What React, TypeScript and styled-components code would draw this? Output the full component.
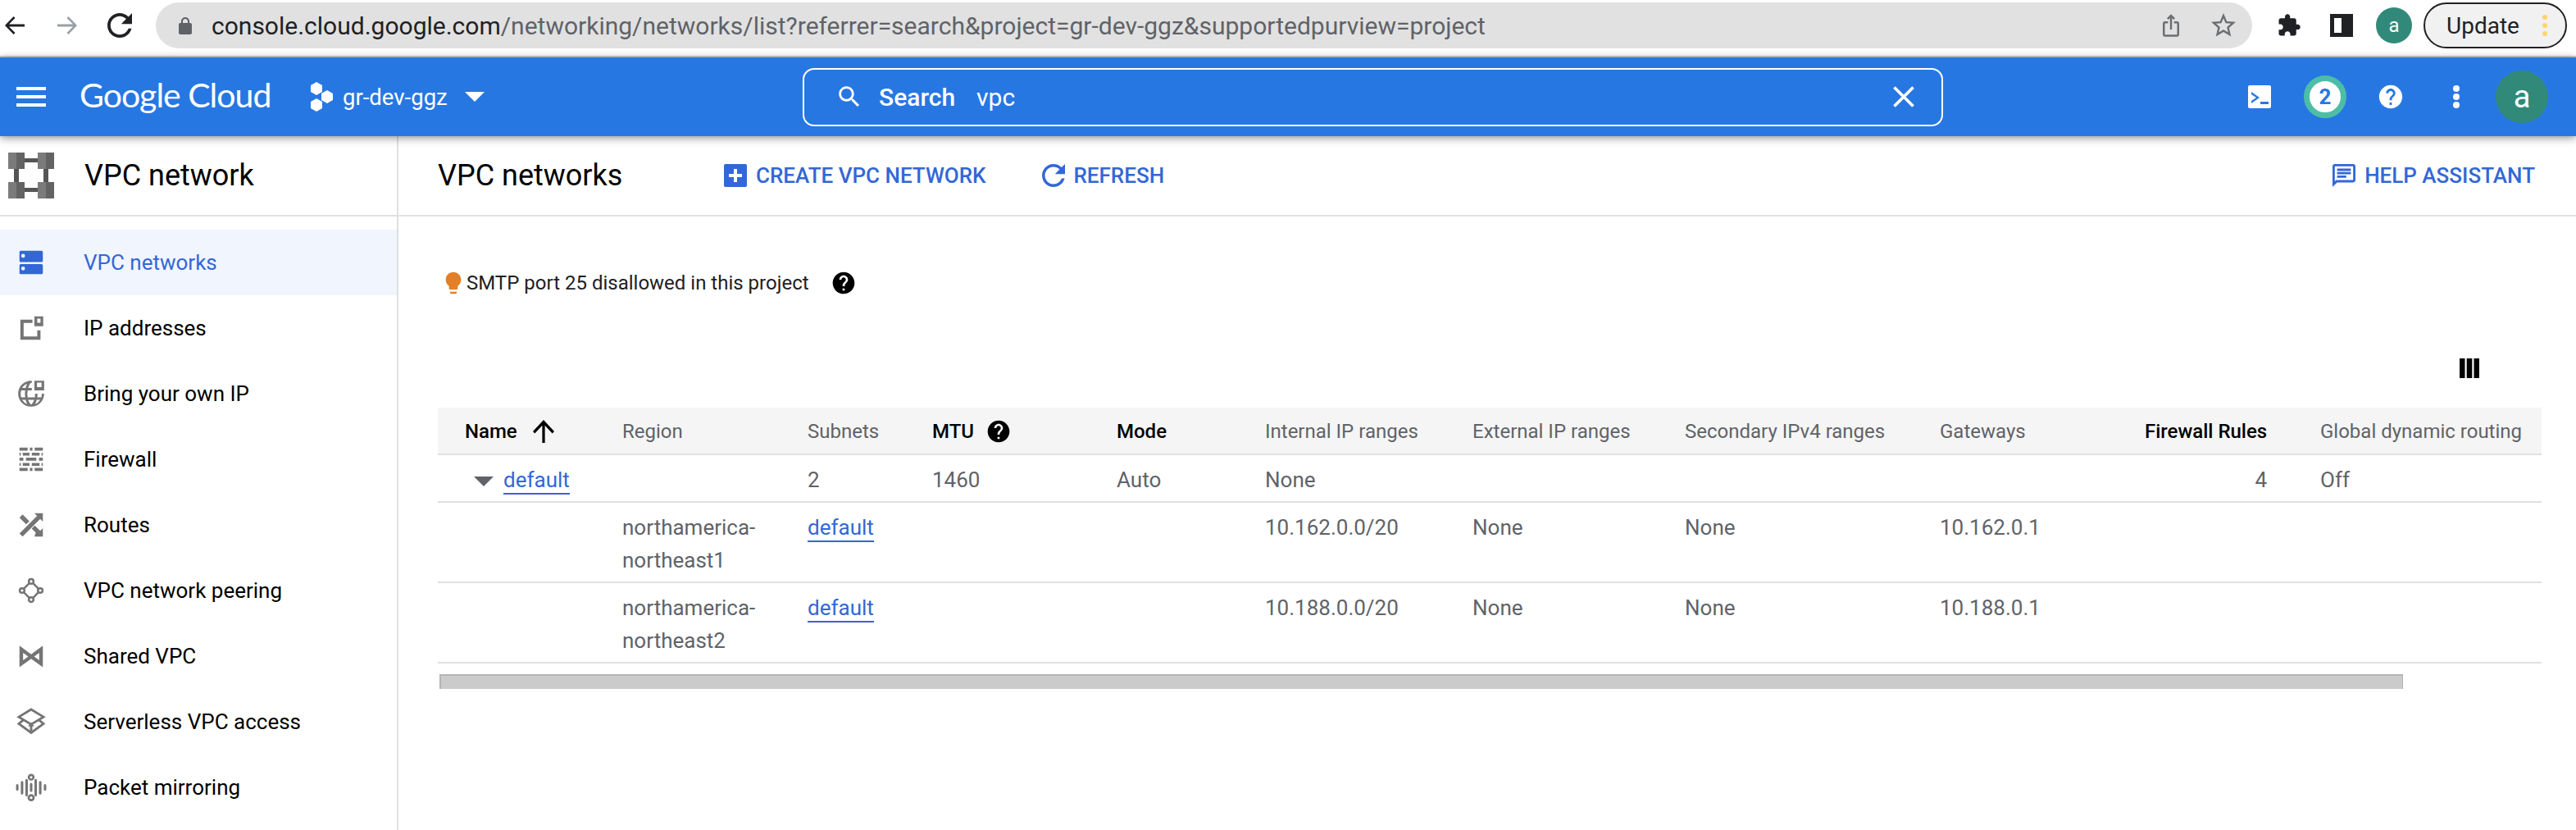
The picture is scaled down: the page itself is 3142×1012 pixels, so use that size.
import React from 'react';
import styled, { createGlobalStyle } from 'styled-components';

const GlobalStyle = createGlobalStyle`
    html, body {
        margin: 0;
        width: 3142px;
        height: 1012px;
        overflow: hidden;
        background: #fff;
        font-family: Roboto, "Liberation Sans", sans-serif;
    }
    * { box-sizing: border-box; }
`;

const Page = styled.div`
    width: 3142px;
    height: 1012px;
    display: flex;
    flex-direction: column;
    overflow: hidden;
`;

/* browser chrome */
const BrowserBar = styled.div`
    height: 70px;
    flex: none;
    display: flex;
    align-items: center;
    padding: 0 0 6px 3px;
    border-bottom: 2px solid #cfcfcf;
    background: #fff;
`;

const ChromeIcon = styled.svg<{ $left?: number; $color?: string }>`
    width: 30px;
    height: 30px;
    flex: none;
    margin-left: ${p => p.$left ?? 0}px;
    fill: ${p => p.$color ?? '#202124'};
`;

const UrlPill = styled.div`
    width: 2557px;
    height: 56px;
    margin-left: 29px;
    flex: none;
    display: flex;
    align-items: center;
    padding-left: 27px;
    border-radius: 28px;
    background: #e1e1e1;
`;

const LockIcon = styled.svg`
    width: 18px;
    height: 21px;
    flex: none;
    fill: #5f6368;
`;

const UrlText = styled.div`
    margin-left: 23px;
    font-size: 30px;
    color: #5f6368;
    white-space: nowrap;
`;

const UrlHost = styled.span`
    color: #202124;
`;

const UrlActions = styled.div`
    margin-left: auto;
    padding-right: 20px;
    display: flex;
    align-items: center;
    gap: 30px;
`;

const SmallAvatar = styled.div`
    width: 44px;
    height: 44px;
    margin-left: 27px;
    flex: none;
    display: flex;
    align-items: center;
    justify-content: center;
    border-radius: 50%;
    background: #318a79;
    color: #fff;
    font-size: 24px;
`;

const UpdateButton = styled.div`
    width: 175px;
    height: 56px;
    margin-left: 14px;
    flex: none;
    display: flex;
    align-items: center;
    padding-left: 26px;
    border: 2px solid #202124;
    border-radius: 28px;
    background: #f1f1f1;
    color: #202124;
    font-size: 28px;
`;

const UpdateDots = styled.div`
    margin-left: auto;
    margin-right: 22px;
    display: flex;
    flex-direction: column;
    gap: 4px;
`;

const UpdateDot = styled.span`
    width: 6px;
    height: 6px;
    border-radius: 50%;
    background: #fdd663;
`;

/* blue console bar */
const TopBar = styled.header`
    height: 96px;
    flex: none;
    position: relative;
    z-index: 2;
    display: flex;
    align-items: center;
    padding: 0 26px 0 20px;
    background: #2777e3;
    color: #fff;
    box-shadow: 0 2px 10px rgba(0, 0, 0, 0.45);
`;

const Hamburger = styled.svg`
    width: 36px;
    height: 24px;
    flex: none;
    fill: #fff;
`;

const Logo = styled.div`
    width: 231px;
    margin-left: 41px;
    flex: none;
    font-family: Lato, Roboto, sans-serif;
    font-size: 41px;
    line-height: 48px;
    letter-spacing: -1px;
    white-space: nowrap;
    transform: translateY(-2px);
`;

const ProjectIcon = styled.svg`
    width: 28px;
    height: 36px;
    margin-left: 50px;
    flex: none;
    fill: #fff;
`;

const ProjectName = styled.div`
    width: 130px;
    margin-left: 12px;
    flex: none;
    font-size: 27.5px;
    white-space: nowrap;
`;

const Caret = styled.div`
    width: 0;
    height: 0;
    margin-left: 19px;
    flex: none;
    border-left: 12px solid transparent;
    border-right: 12px solid transparent;
    border-top: 12px solid #fff;
`;

const SearchBox = styled.div`
    width: 1391px;
    height: 71px;
    margin-left: 388px;
    flex: none;
    display: flex;
    align-items: center;
    padding: 0 24px 0 38px;
    border: 2px solid #fff;
    border-radius: 14px;
    font-size: 30px;
`;

const WhiteIcon = styled.svg<{ $size?: number }>`
    width: ${p => p.$size ?? 36}px;
    height: ${p => p.$size ?? 36}px;
    flex: none;
    fill: #fff;
`;

const SearchLabel = styled.span`
    margin-left: 19px;
    font-weight: 500;
`;

const SearchValue = styled.span`
    margin-left: 26px;
    flex: 1;
`;

const TopActions = styled.div`
    margin-left: auto;
    display: flex;
    align-items: center;
`;

const TopAction = styled.div`
    width: 80px;
    display: flex;
    align-items: center;
    justify-content: center;
`;

const Badge = styled.div`
    width: 52px;
    height: 52px;
    display: flex;
    align-items: center;
    justify-content: center;
    border: 7px solid #4dbda6;
    border-radius: 50%;
    background: #fff;
    color: #2777e3;
    font-size: 26px;
    font-weight: 700;
`;

const Avatar = styled.div`
    width: 64px;
    height: 64px;
    display: flex;
    align-items: center;
    justify-content: center;
    border-radius: 50%;
    background: #318a79;
    color: #fff;
    font-size: 38px;
`;

/* page below the bar */
const Content = styled.div`
    flex: 1;
    display: flex;
    min-height: 0;
`;

const Sidebar = styled.aside`
    width: 486px;
    flex: none;
    border-right: 2px solid #e0e0e0;
`;

const SidebarHeader = styled.div`
    height: 98px;
    display: flex;
    align-items: center;
    padding: 0 0 1px 10px;
    border-bottom: 2px solid #e0e0e0;
    font-size: 36px;
    color: #000;
`;

const HeaderIcon = styled.svg`
    width: 56px;
    height: 56px;
    flex: none;
    margin-right: 37px;
`;

const NavList = styled.nav`
    padding-top: 16px;
`;

const NavRow = styled.div<{ $active?: boolean }>`
    height: 80px;
    display: flex;
    align-items: center;
    background: ${p => (p.$active ? '#f0f5fe' : 'transparent')};
    color: ${p => (p.$active ? '#3367d6' : '#000')};
    font-size: 26px;
`;

const NavIconSlot = styled.svg<{ $active?: boolean }>`
    width: 38px;
    height: 38px;
    margin: 0 45px 0 19px;
    flex: none;
    color: ${p => (p.$active ? '#3367d6' : '#757575')};
    fill: currentColor;
`;

const Main = styled.main`
    flex: 1;
    min-width: 0;
`;

const Toolbar = styled.div`
    height: 98px;
    display: flex;
    align-items: center;
    padding: 0 50px 1px 48px;
    border-bottom: 2px solid #e0e0e0;
`;

const PageTitle = styled.h1`
    width: 349px;
    margin: 0;
    flex: none;
    font-size: 36px;
    font-weight: 400;
    color: #000;
`;

const ToolButton = styled.div<{ $left?: number; $push?: boolean }>`
    display: flex;
    align-items: center;
    gap: 11px;
    margin-left: ${p => (p.$push ? 'auto' : `${p.$left ?? 0}px`)};
    color: #3367d6;
    font-size: 26px;
    font-weight: 500;
    white-space: nowrap;
`;

const BlueIcon = styled.svg`
    width: 28px;
    height: 28px;
    flex: none;
    fill: #3367d6;
`;

const Panel = styled.div`
    padding: 0 42px 0 48px;
`;

const Notice = styled.div`
    height: 28px;
    margin-top: 67px;
    display: flex;
    align-items: center;
    padding-left: 10px;
    font-size: 24px;
    color: #202124;
`;

const BulbIcon = styled.svg`
    width: 32px;
    height: 32px;
    margin-left: -7px;
    flex: none;
    fill: #e37f26;
`;

const HelpIcon = styled.svg<{ $left: number }>`
    width: 32px;
    height: 32px;
    margin-left: ${p => p.$left}px;
    flex: none;
    vertical-align: middle;
    fill: #000;
`;

const ColumnsRow = styled.div`
    height: 24px;
    margin-top: 78px;
    display: flex;
    justify-content: flex-end;
    padding-right: 76px;
`;

const ColumnsIcon = styled.svg`
    width: 24px;
    height: 24px;
    fill: #000;
`;

const Table = styled.table`
    width: 2566px;
    margin-top: 36px;
    border-collapse: separate;
    border-spacing: 0;
    table-layout: fixed;
    font-size: 26px;
    color: #5f6368;
`;

const Col = styled.col<{ $width: number }>`
    width: ${p => p.$width}px;
`;

const HeadCell = styled.th<{ $strong?: boolean; $right?: number; $left?: number }>`
    height: 58px;
    padding: 2px ${p => p.$right ?? 16}px 0 ${p => p.$left ?? 16}px;
    border-bottom: 2px solid #e0e0e0;
    background: #f5f5f5;
    font-size: 24px;
    font-weight: ${p => (p.$strong ? 500 : 400)};
    color: ${p => (p.$strong ? '#000' : '#5f6368')};
    text-align: ${p => (p.$right ? 'right' : 'left')};
    white-space: nowrap;
    line-height: 40px;
`;

const HeadInner = styled.span`
    display: flex;
    align-items: center;
`;

const SortArrow = styled.svg`
    width: 26px;
    height: 28px;
    margin-left: 19px;
    flex: none;
    fill: #000;
`;

const Cell = styled.td<{ $right?: number; $left?: number }>`
    padding: 10px ${p => p.$right ?? 16}px 6px ${p => p.$left ?? 16}px;
    border-bottom: 2px solid #e0e0e0;
    line-height: 40px;
    vertical-align: top;
    text-align: ${p => (p.$right ? 'right' : 'left')};
`;

const Triangle = styled.span`
    display: inline-block;
    width: 0;
    height: 0;
    margin-right: 12px;
    vertical-align: middle;
    border-left: 12px solid transparent;
    border-right: 12px solid transparent;
    border-top: 12px solid #5f6368;
`;

const TableLink = styled.a`
    color: #3367d6;
    line-height: 32px;
    border-bottom: 2px solid #3367d6;
    display: inline-block;
`;

const ScrollTrack = styled.div`
    width: 2395px;
    height: 18px;
    margin: 13px 0 0 2px;
    border-top: 2px solid #b5b5b5;
    border-left: 2px solid #b5b5b5;
    border-right: 1px solid #b5b5b5;
    background: #cbcbcb;
`;

/* material icon paths */
const REFRESH = 'M17.65 6.35C16.2 4.9 14.21 4 12 4c-4.42 0-7.99 3.58-7.99 8s3.57 8 7.99 8c3.73 0 6.84-2.55 7.73-6h-2.08c-.82 2.33-3.04 4-5.65 4-3.31 0-6-2.69-6-6s2.69-6 6-6c1.66 0 3.14.69 4.22 1.78L13 11h7V4l-2.35 2.35z';
const HELP = 'M12 2C6.48 2 2 6.48 2 12s4.48 10 10 10 10-4.48 10-10S17.52 2 12 2zm1 17h-2v-2h2v2zm2.07-7.75l-.9.92C13.45 12.9 13 13.5 13 15h-2v-.5c0-1.1.45-2.1 1.17-2.83l1.24-1.26c.37-.36.59-.86.59-1.41 0-1.1-.9-2-2-2s-2 .9-2 2H8c0-2.21 1.79-4 4-4s4 1.79 4 4c0 .88-.36 1.68-.93 2.25z';

const navIcons: Record<string, React.ReactNode> = {
    dns: <path fillRule="evenodd" d="M4 3h16a1 1 0 0 1 1 1v6.700a1 1 0 0 1-1 1H4a1 1 0 0 1-1-1V4a1 1 0 0 1 1-1zm1.800 2.400a1.500 1.500 0 1 0 0 3 1.500 1.500 0 0 0 0-3zM4 13.200h16a1 1 0 0 1 1 1V20a1 1 0 0 1-1 1H4a1 1 0 0 1-1-1v-5.800a1 1 0 0 1 1-1zm1.800 1.900a1.500 1.500 0 1 0 0 3 1.500 1.500 0 0 0 0-3z" />,
    ip: <path fillRule="evenodd" d="M3.700 5.500h9.300v2.500H6.200v10.500h10.500v-4.800h2.500V21H3.700zM14.500 3h6.800v7.500h-6.800zm2.200 1.700v3.200h2.500V4.700z" />,
    byoip: (
        <>
            <path fillRule="evenodd" d="M12 2a10 10 0 1 0 10 10h-1.800a8.200 8.200 0 0 1-.4 2.800h-3.100a15 15 0 0 0 .2-2.800h-1.900a13 13 0 0 1-.2 2.800H9.300a13 13 0 0 1 0-5.400h3.200V7.500H9.700c.4-1.300.9-2.400 1.600-3.500l1.200-.3V2zM4.300 9.400h3.100a15 15 0 0 0 0 5.400H4.300a8.200 8.200 0 0 1 0-5.400zM5 7.500a8.200 8.200 0 0 1 4-3.300 13 13 0 0 0-1.300 3.300zm0 9.200h2.700A13 13 0 0 0 9 20a8.200 8.200 0 0 1-4-3.300zm4.600 0h4.800a11 11 0 0 1-2.400 3.800 11 11 0 0 1-2.400-3.800zm6.700 0H19a8.200 8.200 0 0 1-4 3.300 13 13 0 0 0 1.300-3.300z" />
            <path fillRule="evenodd" d="M14.500 2H22v7.500h-7.500zm2 1.500v3.500h3.500V3.500z" />
        </>
    ),
    firewall: <path d="M3 3h6.300v2.300H3zm8 0h2v2.300h-2zm3.700 0H21v2.300h-6.300zM5.500 6.900h5.200v2.300H5.500zm7 0h6v2.300h-6zM3 6.900h1v2.300H3zm17 0h1v2.300h-1zM3 10.800h3v2.300H3zm5 0h8v2.300H8zm10 0h3v2.300h-3zM3 14.800h1v2.300H3zm2.500 0h5.200v2.300H5.500zm7 0h6v2.300h-6zm7.500 0h1v2.300h-1zM3 18.700h6.300V21H3zm8 0h2V21h-2zm3.700 0H21V21h-6.300z" />,
    routes: <path d="M10.590 9.170L5.410 4 3 6.410l5.170 5.170 2.420-2.410zM14.500 3l2.040 2.040L3 18.590 5.410 21 18.960 7.460 21 9.500V3h-6.500zm.33 9.410l-2.410 2.410 3.130 3.130L14.500 21H21v-6.500l-2.040 2.040-4.130-4.130z" />,
    peering: (
        <g fill="none" stroke="currentColor" strokeWidth="1.600">
            <circle cx="12" cy="5" r="1.800" />
            <circle cx="5" cy="12" r="1.800" />
            <circle cx="19" cy="12" r="1.800" />
            <circle cx="12" cy="19" r="1.800" />
            <path d="M6.300 10.700l4.400-4.400m2.600 0l4.400 4.400m0 2.600l-4.400 4.400m-2.600 0l-4.400-4.400" />
        </g>
    ),
    shared: <path fillRule="evenodd" d="M3 4l9 6.500L21 4v16.500L12 14l-9 6.500zm2.800 5.400v5.800l3.900-2.900zm12.400 0l-3.900 2.900 3.900 2.900z" />,
    serverless: (
        <g fill="none" stroke="currentColor" strokeWidth="1.800">
            <path d="M12 2.500L21.500 8.300 12 14 2.500 8.300z" />
            <path d="M5.800 10.800L2.500 13.500 12 20.500l9.500-7-3.300-2.700" />
            <path d="M12 19.500v-6" strokeWidth="1.900" />
            <path d="M9.500 15.500L12 12.500l2.500 3z" fill="currentColor" stroke="none" />
        </g>
    ),
    mirroring: (
        <g fill="none" stroke="currentColor" strokeLinecap="round">
            <path d="M1.300 10.500v3M5 8v8.500M8.500 6.500v11.500M12 9.500v5M15.500 6.500v11.500M19 8v8.500M22.700 10.500v3" strokeWidth="1.900" />
            <circle cx="12" cy="4.200" r="1.800" strokeWidth="1.700" />
            <circle cx="12" cy="20" r="1.900" strokeWidth="1.700" />
        </g>
    ),
};

const navItems = [
    { label: 'VPC networks', icon: 'dns', active: true },
    { label: 'IP addresses', icon: 'ip' },
    { label: 'Bring your own IP', icon: 'byoip' },
    { label: 'Firewall', icon: 'firewall' },
    { label: 'Routes', icon: 'routes' },
    { label: 'VPC network peering', icon: 'peering' },
    { label: 'Shared VPC', icon: 'shared' },
    { label: 'Serverless VPC access', icon: 'serverless' },
    { label: 'Packet mirroring', icon: 'mirroring' },
];

const columnWidths = [209, 226, 152, 225, 181, 253, 259, 311, 250, 214, 286];

const subnets = [
    { region: 'northamerica-northeast1', range: '10.162.0.0/20', gateway: '10.162.0.1' },
    { region: 'northamerica-northeast2', range: '10.188.0.0/20', gateway: '10.188.0.1' },
];

const VpcLogo = () => (
    <HeaderIcon viewBox="0 0 56 56">
        <path fill="#555" d="M18 7h20v5H18zM18 43h20v5H18zM7 18h6v20H7zM43 18h6v20h-6z" />
        {[[0, 0], [36, 0], [0, 36], [36, 36]].map(([x, y]) => (
            <g key={`${x}-${y}`}>
                <rect x={x} y={y} width="10" height="20" fill="#7b7b7b" />
                <rect x={x + 10} y={y} width="10" height="20" fill="#636363" />
            </g>
        ))}
    </HeaderIcon>
);

const App = () => {
    return (
        <Page>
            <GlobalStyle />
            <BrowserBar>
                <ChromeIcon viewBox="0 0 30 30">
                    <path d="M27 13.500H8l7.500-7.600L13.600 4 3 15l10.600 11 1.900-1.900L8 16.500h19z" />
                </ChromeIcon>
                <ChromeIcon viewBox="0 0 30 30" $left={34} $color="#9aa0a6">
                    <path d="M3 13.500h19l-7.500-7.600L16.400 4 27 15 16.400 26l-1.900-1.900 7.500-7.600H3z" />
                </ChromeIcon>
                <ChromeIcon viewBox="4 4 16 16" $left={34}>
                    <path d={REFRESH} />
                </ChromeIcon>
                <UrlPill>
                    <LockIcon viewBox="4 1 16 21">
                        <path d="M18 8h-1V6c0-2.760-2.240-5-5-5S7 3.240 7 6v2H6c-1.100 0-2 .9-2 2v10c0 1.100.9 2 2 2h12c1.100 0 2-.9 2-2V10c0-1.100-.9-2-2-2zM9 6c0-1.660 1.340-3 3-3s3 1.340 3 3v2H9V6z" />
                    </LockIcon>
                    <UrlText>
                        <UrlHost>console.cloud.google.com</UrlHost>
                        /networking/networks/list?referrer=search&amp;project=gr-dev-ggz&amp;supportedpurview=project
                    </UrlText>
                    <UrlActions>
                        <ChromeIcon viewBox="0 0 24 24" $color="#6b6e72">
                            <path d="M16 5l-1.420 1.420-1.590-1.590V16h-1.980V4.830L9.420 6.420 8 5l4-4 4 4zm4 5v11c0 1.100-.9 2-2 2H6c-1.110 0-2-.9-2-2V10c0-1.110.89-2 2-2h3v2H6v11h12V10h-3V8h3c1.100 0 2 .89 2 2z" />
                        </ChromeIcon>
                        <ChromeIcon viewBox="2 2 20 20" $color="#6b6e72" $left={4}>
                            <path d="M22 9.240l-7.190-.62L12 2 9.190 8.630 2 9.240l5.460 4.730L5.820 21 12 17.270 18.180 21l-1.630-7.030L22 9.240zM12 15.400l-3.760 2.270 1-4.280-3.320-2.880 4.380-.38L12 6.100l1.710 4.040 4.380.38-3.320 2.880 1 4.280L12 15.400z" />
                        </ChromeIcon>
                    </UrlActions>
                </UrlPill>
                <ChromeIcon viewBox="0 0 24 24" $left={30}>
                    <path d="M20.500 11H19V7c0-1.100-.9-2-2-2h-4V3.500C13 2.120 11.880 1 10.500 1S8 2.120 8 3.500V5H4c-1.100 0-1.990.9-1.990 2v3.800H3.500c1.490 0 2.700 1.210 2.700 2.700s-1.210 2.700-2.700 2.700H2V20c0 1.100.9 2 2 2h3.800v-1.500c0-1.490 1.210-2.700 2.700-2.700 1.490 0 2.700 1.210 2.700 2.700V22H17c1.100 0 2-.9 2-2v-4h1.500c1.380 0 2.500-1.120 2.500-2.500S21.880 11 20.500 11z" />
                </ChromeIcon>
                <ChromeIcon viewBox="0 0 30 30" $left={34}>
                    <path fillRule="evenodd" d="M1 1h28v28H1zm5 5v18h9V6z" />
                </ChromeIcon>
                <SmallAvatar>a</SmallAvatar>
                <UpdateButton>
                    Update
                    <UpdateDots>
                        <UpdateDot />
                        <UpdateDot />
                        <UpdateDot />
                    </UpdateDots>
                </UpdateButton>
            </BrowserBar>

            <TopBar>
                <Hamburger viewBox="0 0 36 24">
                    <path d="M0 0h36v4H0zM0 10h36v4H0zM0 20h36v4H0z" />
                </Hamburger>
                <Logo>Google Cloud</Logo>
                <ProjectIcon viewBox="0 0 28 36">
                    <path d="M8 0l7 4v8l-7 4-7-4V4zM21 10l7 4v8l-7 4-7-4v-8zM8 20l7 4v8l-7 4-7-4v-8z" />
                </ProjectIcon>
                <ProjectName>gr-dev-ggz</ProjectName>
                <Caret />
                <SearchBox>
                    <WhiteIcon viewBox="0 0 24 24" $size={34}>
                        <path d="M15.500 14h-.79l-.28-.27C15.410 12.590 16 11.110 16 9.500 16 5.910 13.090 3 9.500 3S3 5.910 3 9.500 5.910 16 9.500 16c1.610 0 3.090-.59 4.230-1.570l.27.28v.79l5 4.990L20.490 19l-4.990-5zm-6 0C7.010 14 5 11.990 5 9.500S7.010 5 9.500 5 14 7.010 14 9.500 11.990 14 9.500 14z" />
                    </WhiteIcon>
                    <SearchLabel>Search</SearchLabel>
                    <SearchValue>vpc</SearchValue>
                    <WhiteIcon viewBox="0 0 24 24" $size={44}>
                        <path d="M19 6.410L17.590 5 12 10.590 6.410 5 5 6.410 10.590 12 5 17.590 6.410 19 12 13.410 17.590 19 19 17.590 13.410 12z" />
                    </WhiteIcon>
                </SearchBox>
                <TopActions>
                    <TopAction>
                        <WhiteIcon viewBox="0 0 28 28" $size={28}>
                            <path fillRule="evenodd" d="M2 0h24a2 2 0 0 1 2 2v24a2 2 0 0 1-2 2H2a2 2 0 0 1-2-2V2a2 2 0 0 1 2-2zm2 8v3l6 4-6 4v3l10-7zm11 12v3h10v-3z" />
                        </WhiteIcon>
                    </TopAction>
                    <TopAction>
                        <Badge>2</Badge>
                    </TopAction>
                    <TopAction>
                        <WhiteIcon viewBox="0 0 24 24" $size={34}>
                            <path d={HELP} />
                        </WhiteIcon>
                    </TopAction>
                    <TopAction>
                        <WhiteIcon viewBox="0 0 28 28" $size={28}>
                            <circle cx="14" cy="4" r="4" />
                            <circle cx="14" cy="14" r="4" />
                            <circle cx="14" cy="24" r="4" />
                        </WhiteIcon>
                    </TopAction>
                    <TopAction>
                        <Avatar>a</Avatar>
                    </TopAction>
                </TopActions>
            </TopBar>

            <Content>
                <Sidebar>
                    <SidebarHeader>
                        <VpcLogo />
                        VPC network
                    </SidebarHeader>
                    <NavList>
                        {navItems.map(item => (
                            <NavRow key={item.label} $active={item.active}>
                                <NavIconSlot viewBox="0 0 24 24" $active={item.active}>
                                    {navIcons[item.icon]}
                                </NavIconSlot>
                                {item.label}
                            </NavRow>
                        ))}
                    </NavList>
                </Sidebar>

                <Main>
                    <Toolbar>
                        <PageTitle>VPC networks</PageTitle>
                        <ToolButton>
                            <BlueIcon viewBox="0 0 28 28">
                                <path fillRule="evenodd" d="M2 0h24a2 2 0 0 1 2 2v24a2 2 0 0 1-2 2H2a2 2 0 0 1-2-2V2a2 2 0 0 1 2-2zm10 6v6H6v4h6v6h4v-6h6v-4h-6V6z" />
                            </BlueIcon>
                            CREATE VPC NETWORK
                        </ToolButton>
                        <ToolButton $left={68}>
                            <BlueIcon viewBox="4 4 16 16">
                                <path d={REFRESH} />
                            </BlueIcon>
                            REFRESH
                        </ToolButton>
                        <ToolButton $push>
                            <BlueIcon viewBox="2 2 20 20">
                                <path d="M20 2H4c-1.100 0-2 .9-2 2v18l4-4h14c1.100 0 2-.9 2-2V4c0-1.100-.9-2-2-2zm0 14H5.170L4 17.170V4h16v12zM6 6h12v2H6zm0 3h12v2H6zm0 3h8v2H6z" />
                            </BlueIcon>
                            HELP ASSISTANT
                        </ToolButton>
                    </Toolbar>

                    <Panel>
                        <Notice>
                            <BulbIcon viewBox="0 0 24 24">
                                <path d="M9 21c0 .55.45 1 1 1h4c.55 0 1-.45 1-1v-1H9v1zm3-19C8.140 2 5 5.140 5 9c0 2.380 1.190 4.470 3 5.740V17c0 .55.45 1 1 1h6c.55 0 1-.45 1-1v-2.260c1.810-1.270 3-3.360 3-5.740 0-3.860-3.140-7-7-7z" />
                            </BulbIcon>
                            <span>SMTP port 25 disallowed in this project</span>
                            <HelpIcon viewBox="0 0 24 24" $left={26}>
                                <path d={HELP} />
                            </HelpIcon>
                        </Notice>

                        <ColumnsRow>
                            <ColumnsIcon viewBox="0 0 24 24">
                                <path d="M0 0h6.500v24H0zM8.700 0h6.600v24H8.700zM17.500 0H24v24h-6.500z" />
                            </ColumnsIcon>
                        </ColumnsRow>

                        <Table>
                            <colgroup>
                                {columnWidths.map((w, i) => (
                                    <Col key={i} $width={w} />
                                ))}
                            </colgroup>
                            <thead>
                                <tr>
                                    <HeadCell $strong $left={33}>
                                        <HeadInner>
                                            Name
                                            <SortArrow viewBox="4 4 16 16" preserveAspectRatio="none">
                                                <path d="M4 12l1.410 1.410L11 7.830V20h2V7.830l5.580 5.590L20 12l-8-8-8 8z" />
                                            </SortArrow>
                                        </HeadInner>
                                    </HeadCell>
                                    <HeadCell>Region</HeadCell>
                                    <HeadCell>Subnets</HeadCell>
                                    <HeadCell $strong>
                                        <HeadInner>
                                            MTU
                                            <HelpIcon viewBox="0 0 24 24" $left={14}>
                                                <path d={HELP} />
                                            </HelpIcon>
                                        </HeadInner>
                                    </HeadCell>
                                    <HeadCell $strong>Mode</HeadCell>
                                    <HeadCell>Internal IP ranges</HeadCell>
                                    <HeadCell>External IP ranges</HeadCell>
                                    <HeadCell>Secondary IPv4 ranges</HeadCell>
                                    <HeadCell>Gateways</HeadCell>
                                    <HeadCell $strong $right={49}>Firewall Rules</HeadCell>
                                    <HeadCell>Global dynamic routing</HeadCell>
                                </tr>
                            </thead>
                            <tbody>
                                <tr>
                                    <Cell $left={44}>
                                        <Triangle />
                                        <TableLink>default</TableLink>
                                    </Cell>
                                    <Cell />
                                    <Cell>2</Cell>
                                    <Cell>1460</Cell>
                                    <Cell>Auto</Cell>
                                    <Cell>None</Cell>
                                    <Cell />
                                    <Cell />
                                    <Cell />
                                    <Cell $right={49}>4</Cell>
                                    <Cell>Off</Cell>
                                </tr>
                                {subnets.map(s => (
                                    <tr key={s.region}>
                                        <Cell />
                                        <Cell>{s.region}</Cell>
                                        <Cell>
                                            <TableLink>default</TableLink>
                                        </Cell>
                                        <Cell />
                                        <Cell />
                                        <Cell>{s.range}</Cell>
                                        <Cell>None</Cell>
                                        <Cell>None</Cell>
                                        <Cell>{s.gateway}</Cell>
                                        <Cell />
                                        <Cell />
                                    </tr>
                                ))}
                            </tbody>
                        </Table>
                        <ScrollTrack />
                    </Panel>
                </Main>
            </Content>
        </Page>
    );
};

export default App;
